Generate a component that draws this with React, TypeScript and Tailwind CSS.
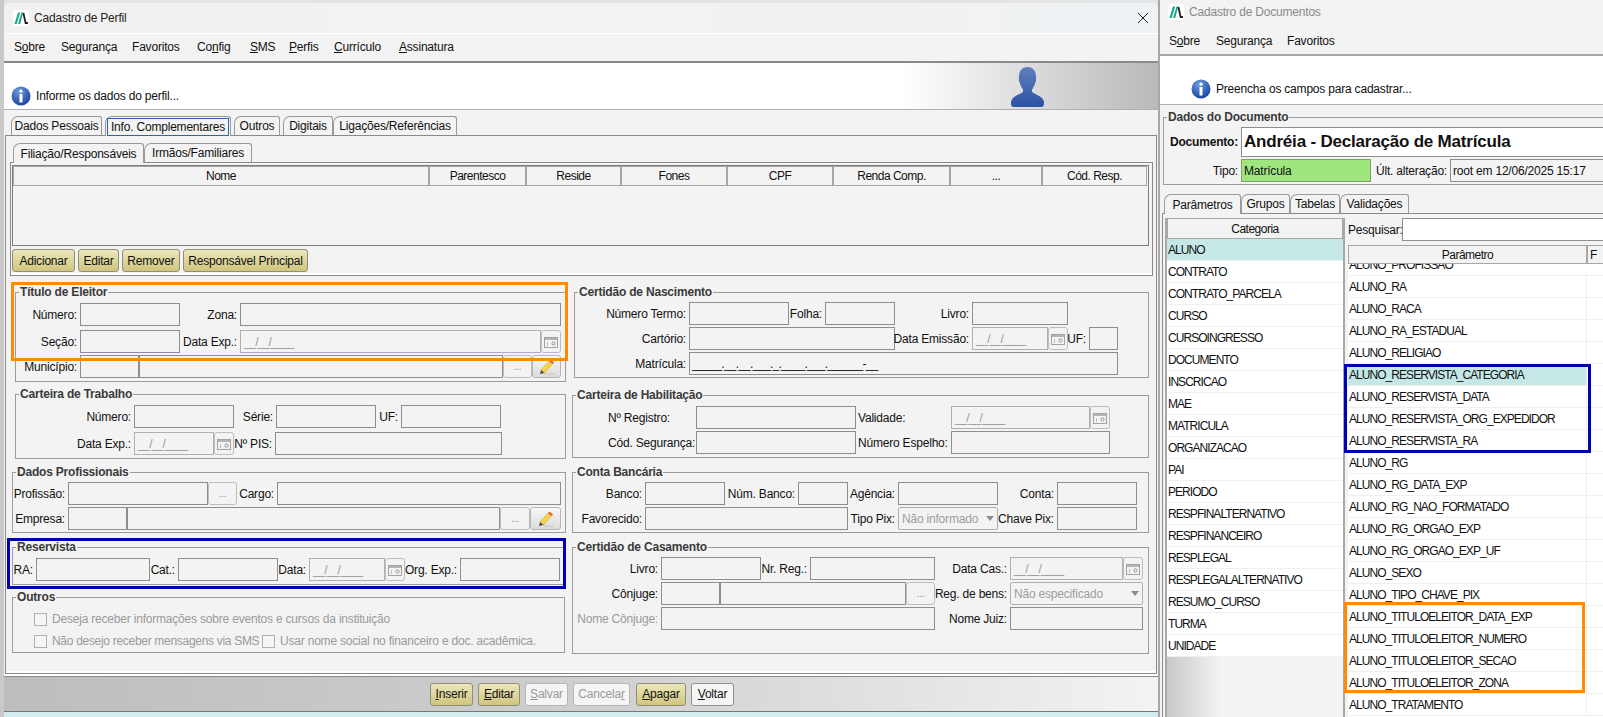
import React from 'react';

type P = { c?: string; children?: React.ReactNode };

const Logo = () => (
  <svg width="16" height="16" viewBox="0 0 16 16" className="bg-white rounded-sm shrink-0">
    <path d="M1.5 14 L5 2.5 L7.2 2.5 L3.7 14 Z" fill="#17a98c" />
    <path d="M5 14 L8.5 2.5 L10.2 2.5 L7.2 14 Z" fill="#17a98c" />
    <path d="M10.4 3 L12.6 13 L15 13" fill="none" stroke="#222" strokeWidth="1.8" />
  </svg>
);

const InfoIcon = () => (
  <svg width="20" height="20" viewBox="0 0 20 20" className="shrink-0">
    <defs>
      <radialGradient id="inf" cx="40%" cy="25%" r="80%">
        <stop offset="0%" stopColor="#6f9be0" />
        <stop offset="100%" stopColor="#143f9c" />
      </radialGradient>
    </defs>
    <circle cx="10" cy="10" r="9.5" fill="url(#inf)" />
    <circle cx="10" cy="5.2" r="1.6" fill="#fff" />
    <rect x="8.5" y="8" width="3" height="8.5" rx="0.6" fill="#fff" />
  </svg>
);

const PersonIcon = () => (
  <svg width="33" height="40" viewBox="0 0 33 40">
    <defs>
      <linearGradient id="per" x1="0" y1="0" x2="0" y2="1">
        <stop offset="0%" stopColor="#5f7fbd" />
        <stop offset="100%" stopColor="#2c52a4" />
      </linearGradient>
    </defs>
    <path
      d="M16.5 0 C10.5 0 8 4.5 8 9.5 C8 12 7.5 13.5 8.5 15 C9.5 18 10.5 21 12 22.5 L12 25 C8 28 1 29 0 35 L0 37 C0 39 1 40 3 40 L30 40 C32 40 33 39 33 37 L33 35 C32 29 25 28 21 25 L21 22.5 C22.5 21 23.5 18 24.5 15 C25.5 13.5 25 12 25 9.5 C25 4.5 22.5 0 16.5 0 Z"
      fill="url(#per)"
    />
  </svg>
);

const CalIcon = () => (
  <svg width="14" height="12" viewBox="0 0 14 12">
    <rect x="0.5" y="1.5" width="13" height="10" fill="#f4f4f4" stroke="#a2a2a2" />
    <rect x="1" y="2" width="12" height="2" fill="#b5b5b5" />
    <circle cx="9.5" cy="7.5" r="1.6" fill="none" stroke="#8f8f8f" />
    <rect x="3" y="6" width="1" height="4" fill="#bbb" />
  </svg>
);

const PencilIcon = () => (
  <svg width="18" height="18" viewBox="0 0 18 18">
    <path d="M3 12 L11 3 L14.5 6 L6.5 15 Z" fill="#f5d24a" stroke="#d8a92c" strokeWidth="0.5" />
    <path d="M11 3 L12.5 1.4 L16 4.4 L14.5 6 Z" fill="#d9642a" />
    <path d="M3 12 L6.5 15 L2 16 Z" fill="#4a4a4a" />
    <rect x="6" y="15.5" width="11" height="1" fill="#c6c6c6" />
  </svg>
);

const L = ({ c = '', children }: P) => (
  <div className={`flex items-center justify-end pr-[3px] whitespace-nowrap shrink-0 ${c}`}>{children}</div>
);

const I = ({ c = '', children }: P) => (
  <div className={`flex items-center border border-[#8e8e8e] bg-[#f3f3f3] px-[2px] shrink-0 whitespace-nowrap overflow-hidden ${c}`}>
    {children}
  </div>
);

const Dots = ({ c = '' }: P) => (
  <div className={`flex items-end justify-center pb-[3px] border border-[#bdbdbd] rounded-[3px] text-[#8d8d8d] text-[10px] shrink-0 ${c}`}>
    ...
  </div>
);

const EditBtn = ({ c = '' }: P) => (
  <div className={`flex items-center justify-center border border-[#b5b5b5] rounded-[3px] bg-gradient-to-b from-[#f7f7f7] to-[#dcdcdc] shrink-0 ${c}`}>
    <PencilIcon />
  </div>
);

const DateField = ({ c = '' }: P) => (
  <div className={`flex shrink-0 ${c}`}>
    <div className="flex-1 flex items-center border border-[#b0b0b0] pl-[3px] text-[#9a9a9a] tracking-[-1.1px] whitespace-nowrap overflow-hidden">
      __/__/____
    </div>
    <div className="w-[20px] flex items-center justify-center border border-[#bdbdbd] rounded-[3px]">
      <CalIcon />
    </div>
  </div>
);

const Select = ({ c = '', children }: P) => (
  <div className={`flex items-center justify-between border border-[#b0b0b0] rounded-[2px] pl-[3px] pr-[3px] text-[#9d9d9d] shrink-0 whitespace-nowrap overflow-hidden ${c}`}>
    {children}
    <span className="w-0 h-0 border-x-[4px] border-x-transparent border-t-[5px] border-t-[#8d8d8d] shrink-0" />
  </div>
);

const Row = ({ c = '', children }: P) => <div className={`flex h-[23px] ${c}`}>{children}</div>;

const Group = ({ title, c = '', children }: P & { title: string }) => (
  <fieldset className={`border border-[#9c9c9c] min-w-0 ${c}`}>
    <legend className="ml-[3px] px-[1px] h-[14px] leading-[14px] font-bold text-[#3a3a3a]">{title}</legend>
    {children}
  </fieldset>
);

const Tab = ({ c = '', children }: P) => (
  <div className={`flex items-center justify-center border border-b-0 border-[#9a9a9a] rounded-tl-[7px] rounded-tr-[3px] whitespace-nowrap shrink-0 ${c}`}>
    {children}
  </div>
);

const Gold = ({ c = '', children }: P) => (
  <div className={`flex items-center justify-center border border-[#8f8f78] rounded-[3px] bg-gradient-to-b from-[#ece7bb] to-[#cfc57d] whitespace-nowrap shrink-0 ${c}`}>
    {children}
  </div>
);

const Plain = ({ c = '', children }: P) => (
  <div className={`flex items-center justify-center border border-[#8f8f8f] rounded-[3px] bg-[#f5f5f5] whitespace-nowrap shrink-0 ${c}`}>
    {children}
  </div>
);

const Head = ({ c = '', children }: P) => (
  <div className={`flex items-center justify-center border border-[#a6a6a6] shrink-0 bg-[#f3f3f3] tracking-[-0.5px] ${c}`}>{children}</div>
);

const Check = () => <span className="w-[13px] h-[13px] border border-[#b0b0b0] bg-[#f6f6f6] shrink-0" />;

const categorias = [
  'ALUNO', 'CONTRATO', 'CONTRATO_PARCELA', 'CURSO', 'CURSOINGRESSO', 'DOCUMENTO', 'INSCRICAO', 'MAE', 'MATRICULA',
  'ORGANIZACAO', 'PAI', 'PERIODO', 'RESPFINALTERNATIVO', 'RESPFINANCEIRO', 'RESPLEGAL', 'RESPLEGALALTERNATIVO',
  'RESUMO_CURSO', 'TURMA', 'UNIDADE',
];

const parametros = [
  'ALUNO_RA', 'ALUNO_RACA', 'ALUNO_RA_ESTADUAL', 'ALUNO_RELIGIAO', 'ALUNO_RESERVISTA_CATEGORIA', 'ALUNO_RESERVISTA_DATA',
  'ALUNO_RESERVISTA_ORG_EXPEDIDOR', 'ALUNO_RESERVISTA_RA', 'ALUNO_RG', 'ALUNO_RG_DATA_EXP', 'ALUNO_RG_NAO_FORMATADO',
  'ALUNO_RG_ORGAO_EXP', 'ALUNO_RG_ORGAO_EXP_UF', 'ALUNO_SEXO', 'ALUNO_TIPO_CHAVE_PIX', 'ALUNO_TITULOELEITOR_DATA_EXP',
  'ALUNO_TITULOELEITOR_NUMERO', 'ALUNO_TITULOELEITOR_SECAO', 'ALUNO_TITULOELEITOR_ZONA', 'ALUNO_TRATAMENTO',
];

const CadastroPerfil = () => (
  <div className="w-[1154px] h-[709px] flex flex-col bg-[#f3f3f3] rounded-t-[6px] border-b border-[#777] shrink-0">
    <div className="h-[30px] flex items-center pl-[9px] pr-[9px] bg-gradient-to-r from-[#f1f1f1] via-[#f4f1f1] to-[#eef2f4] rounded-t-[6px]">
      <Logo />
      <span className="ml-[5px] flex-1 text-[#222]">Cadastro de Perfil</span>
      <svg width="12" height="12" viewBox="0 0 12 12">
        <path d="M1 1 L11 11 M11 1 L1 11" stroke="#222" strokeWidth="1" />
      </svg>
    </div>
    <div className="h-[1px] bg-white" />
    <div className="h-[29px] flex items-center pl-[10px] border-b-2 border-[#8a8a8a]">
      <div className="w-[47px]">S<u>o</u>bre</div>
      <div className="w-[71px]">Segurança</div>
      <div className="w-[65px]">Favoritos</div>
      <div className="w-[53px]">Co<u>n</u>fig</div>
      <div className="w-[39px]"><u>S</u>MS</div>
      <div className="w-[45px]"><u>P</u>erfis</div>
      <div className="w-[65px]"><u>C</u>urrículo</div>
      <div><u>A</u>ssinatura</div>
    </div>
    <div className="h-[48px] flex border-b border-[#b0b0b0] bg-white">
      <div className="flex items-end pb-[3px] pl-[7px] gap-[5px] w-[899px]">
        <InfoIcon />
        <span className="mb-[3px]">Informe os dados do perfil...</span>
      </div>
      <div className="flex-1 flex items-start pt-[4px] pl-[108px] bg-gradient-to-r from-white to-[#b9b9b9]">
        <PersonIcon />
      </div>
    </div>

    <div className="h-[19px] mt-[6px] flex pl-[7px]">
      <Tab c="w-[91px]">Dados Pessoais</Tab>
      <div className="w-[3px]" />
      <Tab c="w-[126px] h-[20px] bg-[#f3f3f3] relative z-10">
        <span className="border border-[#2f62b5] w-[122px] h-[18px] flex items-center justify-center">Info. Complementares</span>
      </Tab>
      <div className="w-[3px]" />
      <Tab c="w-[46px]">Outros</Tab>
      <div className="w-[3px]" />
      <Tab c="w-[50px]">Digitais</Tab>
      <Tab c="w-[124px]">Ligações/Referências</Tab>
    </div>

    <div className="flex-1 mx-[1px] border border-[#8a8a8a] flex flex-col">
      <div className="h-[19px] mt-[7px] flex pl-[7px]">
        <Tab c="w-[131px] h-[20px] bg-[#f3f3f3] relative z-10">Filiação/Responsáveis</Tab>
        <Tab c="w-[108px]">Irmãos/Familiares</Tab>
      </div>
      <div className="ml-[4px] w-[1143px] border border-[#8a8a8a]">
        <div className="ml-[1px] mt-[2px] w-[1137px] h-[81px] border border-[#7d7d7d]">
          <div className="flex h-[20px]">
            <Head c="w-[416px]">Nome</Head>
            <Head c="w-[97px]">Parentesco</Head>
            <Head c="w-[95px]">Reside</Head>
            <Head c="w-[106px]">Fones</Head>
            <Head c="w-[106px]">CPF</Head>
            <Head c="w-[117px]">Renda Comp.</Head>
            <Head c="w-[92px]">...</Head>
            <Head c="w-[105px]">Cód. Resp.</Head>
          </div>
        </div>
        <div className="flex gap-[3px] ml-[1px] mt-[3px] h-[23px]">
          <Gold c="w-[63px]">Adicionar</Gold>
          <Gold c="w-[41px]">Editar</Gold>
          <Gold c="w-[58px]">Remover</Gold>
          <Gold c="w-[125px]">Responsável Principal</Gold>
        </div>
        <div className="h-[2px] mt-[1px] bg-white" />
      </div>

      <div className="flex mt-[9px] h-[386px]">
        <div className="ml-[6px] w-[555px] shrink-0">
          <Group title="Título de Eleitor" c="ml-[3px] w-[551px] h-[97px]">
            <div className="pt-[4px] flex flex-col">
              <Row>
                <L c="w-[64px]">Número:</L>
                <I c="w-[100px]" />
                <L c="w-[60px]">Zona:</L>
                <I c="w-[321px]" />
              </Row>
              <Row c="mt-[4px]">
                <L c="w-[64px]">Seção:</L>
                <I c="w-[100px]" />
                <L c="w-[60px]">Data Exp.:</L>
                <DateField c="w-[321px]" />
              </Row>
              <Row c="mt-[2px]">
                <L c="w-[64px]">Município:</L>
                <I c="w-[59px]" />
                <I c="w-[364px]" />
                <Dots c="w-[29px]" />
                <EditBtn c="w-[29px]" />
              </Row>
            </div>
          </Group>

          <Group title="Carteira de Trabalho" c="ml-[3px] mt-[5px] w-[551px] h-[72px]">
            <div className="pt-[4px] flex flex-col gap-[4px]">
              <Row>
                <L c="w-[118px]">Número:</L>
                <I c="w-[100px]" />
                <L c="w-[42px]">Série:</L>
                <I c="w-[100px]" />
                <L c="w-[25px]">UF:</L>
                <I c="w-[100px]" />
              </Row>
              <Row>
                <L c="w-[118px]">Data Exp.:</L>
                <DateField c="w-[100px]" />
                <L c="w-[41px]">Nº PIS:</L>
                <I c="w-[227px]" />
              </Row>
            </div>
          </Group>

          <Group title="Dados Profissionais" c="mt-[6px] w-[554px] h-[68px]">
            <div className="pt-[3px] flex flex-col gap-[2px]">
              <Row>
                <L c="w-[55px]">Profissão:</L>
                <I c="w-[140px]" />
                <Dots c="w-[29px]" />
                <L c="w-[40px]">Cargo:</L>
                <I c="w-[284px]" />
              </Row>
              <Row>
                <L c="w-[55px]">Empresa:</L>
                <I c="w-[59px]" />
                <I c="w-[373px]" />
                <Dots c="w-[30px]" />
                <EditBtn c="w-[31px]" />
              </Row>
            </div>
          </Group>

          <Group title="Reservista" c="mt-[7px] w-[553px] h-[45px]">
            <Row c="mt-[4px]">
              <L c="w-[23px]">RA:</L>
              <I c="w-[114px]" />
              <L c="w-[28px]">Cat.:</L>
              <I c="w-[100px]" />
              <L c="w-[31px]">Data:</L>
              <DateField c="w-[96px]" />
              <L c="w-[55px]">Org. Exp.:</L>
              <I c="w-[100px]" />
            </Row>
          </Group>

          <Group title="Outros" c="mt-[5px] w-[553px] h-[63px]">
            <div className="pt-[5px] pl-[21px] text-[#9a9a9a]">
              <div className="flex items-center gap-[5px] h-[20px]">
                <Check />
                Deseja receber informações sobre eventos e cursos da instituição
              </div>
              <div className="flex items-center h-[20px] mt-[2px]">
                <Check />
                <span className="ml-[5px] w-[210px] whitespace-nowrap tracking-[-0.3px]">Não desejo receber mensagens via SMS</span>
                <Check />
                <span className="ml-[5px] whitespace-nowrap">Usar nome social no financeiro e doc. acadêmica.</span>
              </div>
            </div>
          </Group>
        </div>

        <div className="ml-[5px] w-[578px] shrink-0">
          <Group title="Certidão de Nascimento" c="ml-[2px] w-[575px] h-[93px]">
            <div className="pt-[3px] flex flex-col gap-[2px]">
              <Row>
                <L c="w-[114px]">Número Termo:</L>
                <I c="w-[100px]" />
                <L c="w-[36px]">Folha:</L>
                <I c="w-[70px]" />
                <L c="w-[77px]">Livro:</L>
                <I c="w-[96px]" />
              </Row>
              <Row>
                <L c="w-[114px]">Cartório:</L>
                <I c="w-[206px]" />
                <L c="w-[77px]">Data Emissão:</L>
                <DateField c="w-[96px]" />
                <L c="w-[21px]">UF:</L>
                <I c="w-[29px]" />
              </Row>
              <Row>
                <L c="w-[114px]">Matrícula:</L>
                <I c="w-[429px] tracking-[-0.8px]">_____.__.__.___._.____.___.______-__</I>
              </Row>
            </div>
          </Group>

          <Group title="Carteira de Habilitação" c="mt-[10px] w-[577px] h-[70px]">
            <div className="pt-[4px] flex flex-col gap-[2px]">
              <Row>
                <L c="w-[123px] !justify-start pl-[35px]">Nº Registro:</L>
                <I c="w-[160px]" />
                <L c="w-[95px] !justify-start pl-[2px]">Validade:</L>
                <DateField c="w-[159px]" />
              </Row>
              <Row>
                <L c="w-[123px] !justify-start pl-[35px]">Cód. Segurança:</L>
                <I c="w-[160px]" />
                <L c="w-[95px] !justify-start pl-[2px]">Número Espelho:</L>
                <I c="w-[159px]" />
              </Row>
            </div>
          </Group>

          <Group title="Conta Bancária" c="mt-[7px] w-[577px] h-[68px]">
            <div className="pt-[3px] flex flex-col gap-[2px]">
              <Row>
                <L c="w-[72px]">Banco:</L>
                <I c="w-[80px]" />
                <L c="w-[73px]">Núm. Banco:</L>
                <I c="w-[50px]" />
                <L c="w-[50px]">Agência:</L>
                <I c="w-[100px]" />
                <L c="w-[59px]">Conta:</L>
                <I c="w-[80px]" />
              </Row>
              <Row>
                <L c="w-[72px]">Favorecido:</L>
                <I c="w-[203px]" />
                <L c="w-[50px]">Tipo Pix:</L>
                <Select c="w-[100px]">Não informado</Select>
                <L c="w-[59px]">Chave Pix:</L>
                <I c="w-[80px]" />
              </Row>
            </div>
          </Group>

          <Group title="Certidão de Casamento" c="mt-[7px] w-[577px] h-[114px]">
            <div className="pt-[3px] flex flex-col gap-[2px]">
              <Row>
                <L c="w-[88px]">Livro:</L>
                <I c="w-[100px]" />
                <L c="w-[49px]">Nr. Reg.:</L>
                <I c="w-[125px]" />
                <L c="w-[75px]">Data Cas.:</L>
                <DateField c="w-[133px]" />
              </Row>
              <Row>
                <L c="w-[88px]">Cônjuge:</L>
                <I c="w-[59px]" />
                <I c="w-[186px]" />
                <Dots c="w-[29px]" />
                <L c="w-[75px]">Reg. de bens:</L>
                <Select c="w-[133px]">Não especificado</Select>
              </Row>
              <Row>
                <L c="w-[88px] text-[#9a9a9a]">Nome Cônjuge:</L>
                <I c="w-[274px]" />
                <L c="w-[75px]">Nome Juiz:</L>
                <I c="w-[133px]" />
              </Row>
            </div>
          </Group>
        </div>
      </div>
      <div className="h-[2px] bg-white" />
    </div>

    <div className="h-[2px] bg-white" />
    <div className="h-[35px] border-t border-[#8a8a8a] flex items-center gap-[5px] pl-[426px] bg-gradient-to-r from-[#bdbdbd] via-[#cfcfcf] to-[#f3f3f3]">
      <Gold c="w-[43px] h-[23px]"><span><u>I</u>nserir</span></Gold>
      <Gold c="w-[42px] h-[23px]"><span><u>E</u>ditar</span></Gold>
      <Plain c="w-[43px] h-[23px] text-[#9a9a9a] !border-[#b5b5b5]"><span><u>S</u>alvar</span></Plain>
      <Plain c="w-[57px] h-[23px] text-[#9a9a9a] !border-[#b5b5b5]"><span>Cancela<u>r</u></span></Plain>
      <Gold c="w-[50px] h-[23px] ml-[1px]"><span><u>A</u>pagar</span></Gold>
      <Plain c="w-[43px] h-[23px]"><span><u>V</u>oltar</span></Plain>
    </div>
  </div>
);

const CadastroDocumentos = () => (
  <div className="w-[443px] h-[717px] flex flex-col bg-[#f3f3f3] overflow-hidden shrink-0">
    <div className="h-[24px] mb-[3px] flex items-center pl-[8px] text-[#8a8a8a] shrink-0">
      <Logo />
      <span className="ml-[5px]">Cadastro de Documentos</span>
    </div>
    <div className="h-[29px] flex items-center pl-[9px] pt-[1px] border-b-2 border-[#a8a8a8] shrink-0">
      <div className="w-[47px]">S<u>o</u>bre</div>
      <div className="w-[71px]">Segurança</div>
      <div>Favoritos</div>
    </div>
    <div className="h-[49px] flex items-end gap-[5px] pl-[31px] pb-[5px] bg-white border-b border-[#b0b0b0] shrink-0">
      <InfoIcon />
      <span className="mb-[3px]">Preencha os campos para cadastrar...</span>
    </div>

    <Group title="Dados do Documento" c="ml-[3px] mt-[5px] w-[460px] h-[75px] shrink-0">
      <div className="pt-[3px]">
        <div className="flex h-[30px]">
          <L c="w-[77px] font-bold">Documento:</L>
          <I c="w-[370px] !bg-white font-bold text-[17px]">Andréia - Declaração de Matrícula</I>
        </div>
        <Row c="mt-[2px]">
          <L c="w-[77px]">Tipo:</L>
          <I c="w-[130px] !bg-[#a0e67e] !border-[#7f9f70]">Matrícula</I>
          <L c="w-[79px]">Últ. alteração:</L>
          <I c="w-[200px] !bg-[#f3f3f3]">root em 12/06/2025 15:17</I>
        </Row>
      </div>
    </Group>

    <div className="h-[19px] mt-[9px] flex pl-[4px] shrink-0">
      <Tab c="w-[77px] h-[20px] bg-[#f3f3f3] relative z-10">Parâmetros</Tab>
      <Tab c="w-[49px]">Grupos</Tab>
      <Tab c="w-[50px]">Tabelas</Tab>
      <Tab c="w-[69px]">Validações</Tab>
    </div>

    <div className="flex-1 flex ml-[2px] border-l border-t border-[#8a8a8a] min-h-0">
      <div className="ml-[2px] mt-[4px] w-[180px] flex flex-col border-x-2 border-[#a8a8a8] shrink-0">
        <Head c="h-[21px] !border-[#a6a6a6]">Categoria</Head>
        {categorias.map((cat, i) => (
          <div
            key={cat}
            className={`h-[22px] flex items-center pl-[1px] border-b border-[#efefef] shrink-0 tracking-[-0.95px] ${i === 0 ? 'bg-[#c5e8e6]' : 'bg-white'}`}
          >
            {cat}
          </div>
        ))}
        <div className="flex-1 bg-gradient-to-r from-[#c9c9c9] to-[#f3f3f3] to-30%" />
      </div>

      <div className="ml-[3px] mt-[4px] w-[300px] shrink-0 flex flex-col">
        <div className="flex h-[23px] shrink-0">
          <div className="w-[54px] flex items-center">Pesquisar:</div>
          <I c="flex-1 !bg-white" />
        </div>
        <div className="flex h-[19px] mt-[4px] shrink-0">
          <Head c="w-[239px]">Parâmetro</Head>
          <Head c="flex-1 !justify-start pl-[2px]">F</Head>
        </div>
        <div className="flex-1 bg-white min-h-0 overflow-hidden tracking-[-0.95px]">
          <div className="h-[12px] overflow-hidden border-b border-[#efefef]">
            <div className="h-[22px] -mt-[10px] flex items-center pl-[1px]">ALUNO_PROFISSAO</div>
          </div>
          {parametros.map((p, i) => (
            <div key={p} className="h-[22px] flex border-b border-[#efefef]">
              <div className={`w-[239px] flex items-center pl-[1px] border-r border-[#efefef] ${i === 4 ? 'bg-[#c5e8e6]' : ''}`}>{p}</div>
            </div>
          ))}
        </div>
      </div>
    </div>
  </div>
);

const App = () => {
  return (
    <div className="relative w-[1603px] h-[717px] overflow-hidden flex bg-[#e4e4e4] font-['Liberation_Sans',sans-serif] text-[12px] leading-[14px] tracking-[-0.2px] text-[#111]">
      <div className="w-[4px] h-[717px] bg-[#c9c9c9] shrink-0" />
      <div className="w-[1154px] h-[717px] flex flex-col shrink-0">
        <div className="h-[3px] bg-[#e4e4e4]" />
        <CadastroPerfil />
        <div className="h-[5px] bg-[#d3ecee]" />
      </div>
      <div className="w-[2px] h-[717px] bg-[#a8a8a8] shrink-0" />
      <CadastroDocumentos />

      {/* Marcações sobre a imagem */}
      <div className="absolute left-[11px] top-[282px] w-[557px] h-[79px] border-[3px] border-[#ff8c00]" />
      <div className="absolute left-[7px] top-[538px] w-[559px] h-[51px] border-[3px] border-[#0000b4]" />
      <div className="absolute left-[1344px] top-[364px] w-[247px] h-[89px] border-[3px] border-[#0000b4]" />
      <div className="absolute left-[1344px] top-[602px] w-[241px] h-[91px] border-[3px] border-[#ff8c00]" />
    </div>
  );
};

export default App;
